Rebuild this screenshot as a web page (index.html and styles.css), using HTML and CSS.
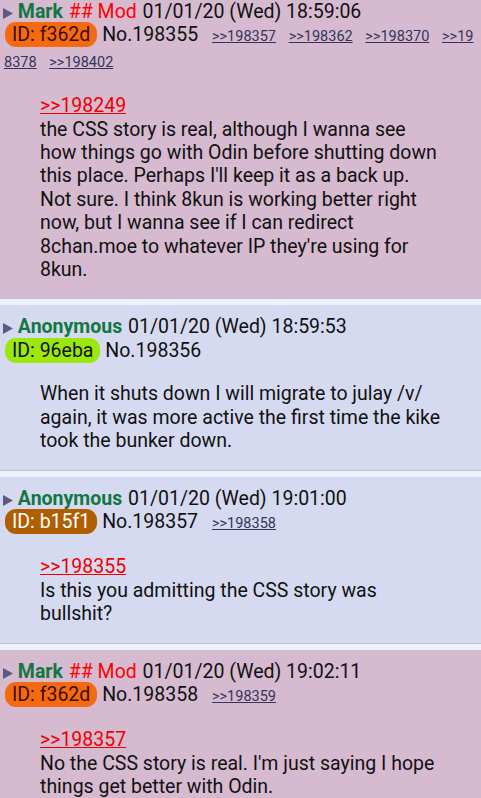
FILE: index.html
```html
<!DOCTYPE html>
<html lang="en">
<head>
    <meta charset="UTF-8">
    <meta name="viewport" content="width=device-width, initial-scale=1.0">
    <title>/v/ - Thread</title>
    <link rel="stylesheet" href="styles.css">
</head>
<body>

<div class="thread">
    <div class="post mod">
        <div class="intro">
            <svg class="arrow" width="10" height="11" viewBox="0 0 10 11"><path d="M0 0L10 5.5L0 11Z"/></svg> <span class="name">Mark</span> <span class="capcode">## Mod</span> <time>01/01/20 (Wed) 18:59:06</time><br>
            <span class="poster-id id-f362d">ID: f362d</span> <span class="post-no">No.198355</span> <span class="replies"><a href="#198357">&gt;&gt;198357</a> <a href="#198362">&gt;&gt;198362</a> <a href="#198370">&gt;&gt;198370</a> <a href="#198378">&gt;&gt;198378</a> <a href="#198402">&gt;&gt;198402</a></span>
        </div>
        <div class="body">
            <a class="quote" href="#198249">&gt;&gt;198249</a><br>
            the CSS story is real, although I wanna see how things go with Odin before shutting down this place. Perhaps I'll keep it as a back up. Not sure. I think 8kun is working better right now, but I wanna see if I can redirect 8chan.moe to whatever IP they're using for 8kun.
        </div>
    </div>

    <div class="post">
        <div class="intro">
            <svg class="arrow" width="10" height="11" viewBox="0 0 10 11"><path d="M0 0L10 5.5L0 11Z"/></svg> <span class="name">Anonymous</span> <time>01/01/20 (Wed) 18:59:53</time><br>
            <span class="poster-id id-96eba">ID: 96eba</span> <span class="post-no">No.198356</span>
        </div>
        <div class="body">
            When it shuts down I will migrate to julay /v/ again, it was more active the first time the kike took the bunker down.
        </div>
    </div>

    <div class="post">
        <div class="intro">
            <svg class="arrow" width="10" height="11" viewBox="0 0 10 11"><path d="M0 0L10 5.5L0 11Z"/></svg> <span class="name">Anonymous</span> <time>01/01/20 (Wed) 19:01:00</time><br>
            <span class="poster-id id-b15f1">ID: b15f1</span> <span class="post-no">No.198357</span> <span class="replies"><a href="#198358">&gt;&gt;198358</a></span>
        </div>
        <div class="body">
            <a class="quote" href="#198355">&gt;&gt;198355</a><br>
            Is this you admitting the CSS story was bullshit?
        </div>
    </div>

    <div class="post mod">
        <div class="intro">
            <svg class="arrow" width="10" height="11" viewBox="0 0 10 11"><path d="M0 0L10 5.5L0 11Z"/></svg> <span class="name">Mark</span> <span class="capcode">## Mod</span> <time>01/01/20 (Wed) 19:02:11</time><br>
            <span class="poster-id id-f362d">ID: f362d</span> <span class="post-no">No.198358</span> <span class="replies"><a href="#198359">&gt;&gt;198359</a></span>
        </div>
        <div class="body">
            <a class="quote" href="#198357">&gt;&gt;198357</a><br>
            No the CSS story is real. I'm just saying I hope things get better with Odin.
        </div>
    </div>
</div>

</body>
</html>
```

FILE: styles.css
```css
body {
    font-family: Roboto, "Noto Sans", sans-serif;
    font-size: 19.5px;
    line-height: 23.4px;
    background: #eef2ff;
    color: #111;
    margin: 0;
    padding: 0;
}
.thread {
    margin-top: -10px;
}
.post {
    background: #d6daf0;
    border-bottom: 1px solid #b7c5d9;
    margin-bottom: 6px;
    padding: 10px 4px 0 4px;
}
.post.mod {
    background: #d6bad0;
}
.intro {
    word-break: break-all;
}
.arrow {
    fill: #5a5a84;
    margin-left: -1px;
    vertical-align: -1px;
}
.name {
    color: #117743;
    font-weight: bold;
    margin-right: 1px;
}
.capcode {
    color: #f00;
    margin-right: 1px;
}
.poster-id {
    padding: 1px 7px;
    border-radius: 11px;
    margin-left: 1px;
}
.id-f362d {
    background: #f56a10;
    color: #3d0e00;
}
.id-96eba {
    background: #9de80c;
    color: #111;
}
.id-b15f1 {
    background: #b05e02;
    color: #fff;
}
.replies {
    font-size: 14.5px;
}
.replies a {
    color: #34345c;
    margin-left: 9px;
}
.body {
    margin: 20px 36px 17px 36px;
}
.quote {
    color: #e00;
}
```
